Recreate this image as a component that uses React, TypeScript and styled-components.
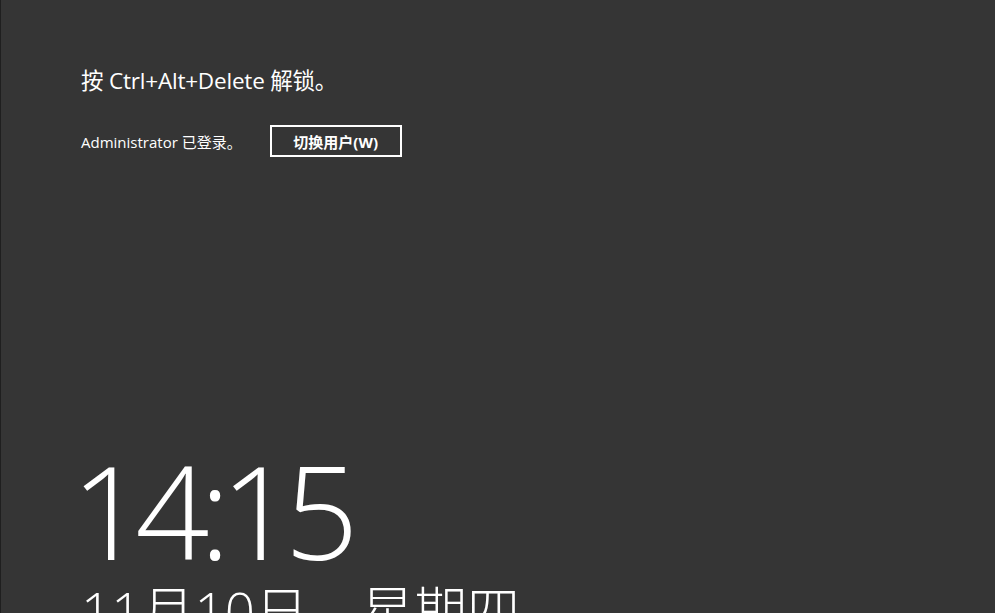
import React from "react";
import styled, { createGlobalStyle } from "styled-components";

const GlobalStyle = createGlobalStyle`
  html, body {
    margin: 0;
    padding: 0;
    background: #353535;
    overflow: hidden;
  }
  #root {
    height: 100vh;
  }
`;

const Screen = styled.div`
  box-sizing: border-box;
  height: 100vh;
  width: 100vw;
  background: #353535;
  border-left: 1px solid #1f1f1f;
  padding-left: 80px;
  display: flex;
  flex-direction: column;
  color: #ffffff;
  font-family: "Open Sans", "Noto Sans CJK SC", sans-serif;
  overflow: hidden;
`;

const Prompt = styled.div`
  margin-top: 66px;
  font-size: 22.5px;
  line-height: 30px;
  letter-spacing: -0.2px;
`;

const SessionRow = styled.div`
  margin-top: 29px;
  display: flex;
  align-items: center;
  gap: 28px;
`;

const SessionText = styled.span`
  font-size: 15px;
  line-height: 20px;
  margin-top: 2px;
`;

const SwitchButton = styled.button`
  box-sizing: border-box;
  width: 132px;
  height: 32px;
  background: transparent;
  border: 2px solid #ffffff;
  color: #ffffff;
  font-family: "Open Sans", "Noto Sans CJK SC", sans-serif;
  font-weight: 700;
  font-size: 15px;
  padding: 0;
  display: flex;
  align-items: center;
  justify-content: center;
`;

const Clock = styled.div`
  margin-top: auto;
  display: flex;
  flex-direction: column;
`;

const Time = styled.div`
  font-weight: 300;
  font-size: 130px;
  line-height: 130px;
  letter-spacing: -10px;
  margin-left: -10px;
  margin-bottom: 6px;
`;

const DateLine = styled.div`
  font-weight: 300;
  font-size: 53px;
  line-height: 60px;
  margin-bottom: -28px;
`;

export default function App() {
  return (
    <>
      <GlobalStyle />
      <Screen>
        <Prompt>按 Ctrl+Alt+Delete 解锁。</Prompt>
        <SessionRow>
          <SessionText>Administrator 已登录。</SessionText>
          <SwitchButton>切换用户(W)</SwitchButton>
        </SessionRow>
        <Clock>
          <Time>14:15</Time>
          <DateLine>11月10日，星期四</DateLine>
        </Clock>
      </Screen>
    </>
  );
}
